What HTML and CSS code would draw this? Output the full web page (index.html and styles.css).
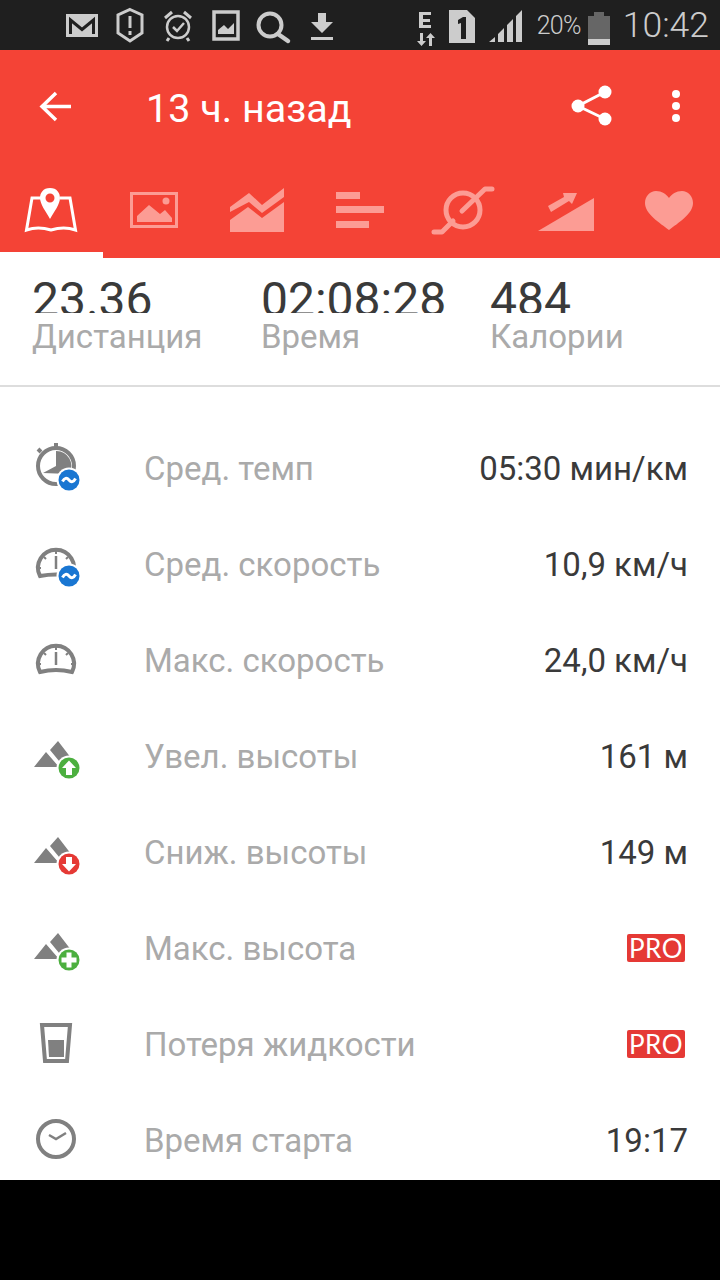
FILE: index.html
```html
<!DOCTYPE html>
<html lang="en">
<head>
  <meta charset="UTF-8" />
  <title>13 ч. назад</title>
  <link rel="stylesheet" href="styles.css">
</head>
<body>
  <div class="screen">

    <div class="status">
      <div class="status-left">
        <svg viewBox="58 0 48 50"><path class="st-fill" d="M66 14H98V37H66Z"/><path d="M70.500 34V20L82 29.500L93.500 20V34" fill="none" stroke="#1f1f1f" stroke-width="3"/></svg>
        <svg viewBox="106 0 48 50"><path d="M130 9.500L142 15V33L130 41L118 33V15Z" fill="none" stroke="#ccc" stroke-width="3"/><path class="st-fill" d="M128.500 16H131.500V28H128.500ZM128.500 31H131.500V35H128.500Z"/></svg>
        <svg viewBox="154 0 48 50"><circle cx="178" cy="27" r="11" fill="none" stroke="#ccc" stroke-width="2.500"/><path d="M165 18L172 12M191 18L184 12M169 38L167 41M187 38L189 41" stroke="#ccc" stroke-width="3"/><path d="M173 27L177 31L184 23" fill="none" stroke="#ccc" stroke-width="2.500"/></svg>
        <svg viewBox="202 0 48 50"><path d="M214 12H238V39H214Z" fill="none" stroke="#ccc" stroke-width="3.500"/><path class="st-fill" d="M218 34V30L224 25L228 29L234 23V34Z"/></svg>
        <svg viewBox="250 0 48 50"><circle cx="270" cy="25" r="11.500" fill="none" stroke="#ccc" stroke-width="4"/><path d="M278 34L288 41" stroke="#ccc" stroke-width="4.500" stroke-linecap="round"/></svg>
        <svg viewBox="298 0 48 50"><path class="st-fill" d="M318 13H326V22H333L322 33L311 22H318ZM311 37H333V40H311Z"/></svg>
      </div>
      <div class="status-right">
        <svg class="ic-net" viewBox="0 0 20 36"><path class="st-fill" d="M3 1H15V4H7V8H14V11H7V14H15V17H3Z"/><path class="st-fill" d="M7 22V30H10L5.500 35L1 30H4V22ZM13 35V27H10L14.500 22L19 27H16V35Z"/></svg>
        <svg class="ic-sim" viewBox="0 0 26 33"><path class="st-fill" d="M0 0H18L26 8V33H0Z"/><path d="M9 10L14 7H17V29H12V13L9 14Z" fill="#1f1f1f"/></svg>
        <svg class="ic-signal" viewBox="0 0 34 33"><path class="st-fill" d="M0 32L6 27V32ZM9 24L15 18V32H9ZM18 15L24 9V32H18ZM27 6L33 0V32H27Z"/></svg>
        <span class="batt-pct">20%</span>
        <div class="batt"><div class="batt-level"></div></div>
        <span class="clock">10:42</span>
      </div>
    </div>

    <div class="appbar">
      <div class="toolbar">
        <svg class="back" viewBox="0 0 36 34"><path d="M33 16.500H5M18 3L4 16.500L18 30" fill="none" stroke="#fff" stroke-width="3.500"/></svg>
        <div class="title">13 ч. назад</div>
        <svg class="share" viewBox="568 84 48 44"><circle cx="605" cy="92" r="6.500" fill="#fff"/><circle cx="578" cy="106" r="6.500" fill="#fff"/><circle cx="605" cy="119" r="6.500" fill="#fff"/><path d="M605 92L578 106L605 119" fill="none" stroke="#fff" stroke-width="3"/></svg>
        <svg class="more" viewBox="0 0 10 34"><circle cx="5" cy="5" r="4" fill="#fff"/><circle cx="5" cy="17" r="4" fill="#fff"/><circle cx="5" cy="29" r="4" fill="#fff"/></svg>
      </div>
      <div class="tabs">
        <div class="tab active">
          <svg viewBox="19 182 64 56"><path d="M41 198H32L26.500 230Q38 226 51 230Q64 226 75.500 230L70 198H60" fill="none" stroke="#fff" stroke-width="3"/><path fill-rule="evenodd" fill="#fff" d="M50 188C43 188 40 193 40 198C40 204 46 212 50 219C54 212 60 204 60 198C60 193 57 188 50 188ZM50 193.500A4.500 4.500 0 1 1 50 202.500A4.500 4.500 0 1 1 50 193.500Z"/></svg>
        </div>
        <div class="tab">
          <svg viewBox="122 182 64 56"><path d="M131.500 193.500H176.500V226.500H131.500Z" fill="none" stroke="#fc9c94" stroke-width="3"/><path class="tab-fill" d="M137 222V216L149 205L160 214L165 210L172 218V222Z"/><circle class="tab-fill" cx="166" cy="201" r="3.500"/></svg>
        </div>
        <div class="tab">
          <svg viewBox="225 182 64 56"><path class="tab-fill" d="M230 207L249 193L262 205L284 188V197L262 213L249 202L230 212Z"/><path class="tab-fill" d="M230 220L248 207L262 218L284 202V232H230Z"/></svg>
        </div>
        <div class="tab">
          <svg viewBox="328 182 64 56"><path class="tab-fill" d="M336 192H360V199H336ZM336 206H384V213H336ZM336 221H369V228H336Z"/></svg>
        </div>
        <div class="tab">
          <svg viewBox="431 182 64 56"><circle cx="463" cy="210" r="17" fill="none" stroke="#fc9c94" stroke-width="5"/><path d="M462 211L485 189H492M434 232H442L453 221" fill="none" stroke="#fc9c94" stroke-width="5" stroke-linecap="round" stroke-linejoin="round"/></svg>
        </div>
        <div class="tab">
          <svg viewBox="534 182 64 56"><path class="tab-fill" d="M538 231L594 198V231Z"/><path class="tab-fill" d="M548 206L564 197L563 193L577 193L572 204L569 201L551 212Z"/></svg>
        </div>
        <div class="tab">
          <svg viewBox="637 182 64 56"><path class="tab-fill" d="M669 230C660 223 645 214 645 203C645 196 650 191 656 191C662 191 666 194 669 198C672 194 676 191 682 191C688 191 693 196 693 203C693 214 678 223 669 230Z"/></svg>
        </div>
      </div>
    </div>

    <div class="stats">
      <div class="stat">
        <div class="stat-value">23.36</div>
        <div class="stat-label">Дистанция</div>
      </div>
      <div class="stat">
        <div class="stat-value">02:08:28</div>
        <div class="stat-label">Время</div>
      </div>
      <div class="stat">
        <div class="stat-value">484</div>
        <div class="stat-label">Калории</div>
      </div>
    </div>

    <div class="rows">
      <div class="row">
        <svg viewBox="0 0 60 60"><circle cx="30" cy="27" r="18" class="line"/><path d="M30 8V4M15 13L12 10" class="knob"/><path class="solid" d="M30 12A15 15 0 0 1 43 35L17 34L30 27Z"/><circle class="ring" cx="43" cy="41" r="12.500"/><circle class="blue" cx="43" cy="41" r="10.500"/><path class="wave" d="M36.500 42.500Q39.500 37 43 41T49.500 39.500"/></svg>
        <span class="label">Сред. темп</span>
        <span class="value">05:30 мин/км</span>
      </div>
      <div class="row">
        <svg viewBox="0 0 60 60"><path class="line" d="M14 41A18 18 0 1 1 46 41Q30 38 14 41Z"/><path class="tick" d="M30 16V19M18 22L20 24M42 22L40 24M13 33H15"/><path class="needle" d="M30 21V34"/><circle class="ring" cx="43" cy="41" r="12.500"/><circle class="blue" cx="43" cy="41" r="10.500"/><path class="wave" d="M36.500 42.500Q39.500 37 43 41T49.500 39.500"/></svg>
        <span class="label">Сред. скорость</span>
        <span class="value">10,9 км/ч</span>
      </div>
      <div class="row">
        <svg viewBox="0 0 60 60"><path class="line" d="M14 41A18 18 0 1 1 46 41Q30 37 14 41Z"/><path class="tick" d="M30 16V19M18 22L20 24M42 22L40 24M13 33H15M47 33H45"/><path class="needle" d="M30 21V34"/></svg>
        <span class="label">Макс. скорость</span>
        <span class="value">24,0 км/ч</span>
      </div>
      <div class="row">
        <svg viewBox="0 0 60 60"><path class="solid" d="M8 40L20 25L33 40ZM24 23L32 14L52 40H38Z"/><circle class="ring" cx="43" cy="41" r="12.500"/><circle class="green" cx="43" cy="41" r="10.500"/><path class="mark" d="M43 33.500L50 41H46V48H40V41H36Z"/></svg>
        <span class="label">Увел. высоты</span>
        <span class="value">161 м</span>
      </div>
      <div class="row">
        <svg viewBox="0 0 60 60"><path class="solid" d="M8 40L20 25L33 40ZM24 23L32 14L52 40H38Z"/><circle class="ring" cx="43" cy="41" r="12.500"/><circle class="red" cx="43" cy="41" r="10.500"/><path class="mark" d="M43 48.500L50 41H46V34H40V41H36Z"/></svg>
        <span class="label">Сниж. высоты</span>
        <span class="value">149 м</span>
      </div>
      <div class="row">
        <svg viewBox="0 0 60 60"><path class="solid" d="M8 40L20 25L33 40ZM24 23L32 14L52 40H38Z"/><circle class="ring" cx="43" cy="41" r="12.500"/><circle class="green" cx="43" cy="41" r="10.500"/><path class="mark" d="M40.500 33.500H45.500V38.500H50.500V43.500H45.500V48.500H40.500V43.500H35.500V38.500H40.500Z"/></svg>
        <span class="label">Макс. высота</span>
        <span class="pro">PRO</span>
      </div>
      <div class="row">
        <svg viewBox="0 0 60 60"><path class="line" d="M16 10H44L41 46H19Z"/><path class="solid" d="M22 25H38V42H23Z"/></svg>
        <span class="label">Потеря жидкости</span>
        <span class="pro">PRO</span>
      </div>
      <div class="row">
        <svg viewBox="0 0 60 60"><circle cx="30" cy="28" r="18" class="line"/><path class="hands" d="M23 24L30 28L40 22"/></svg>
        <span class="label">Время старта</span>
        <span class="value">19:17</span>
      </div>
    </div>

  </div>
  <div class="navbar"></div>
</body>
</html>
```

FILE: styles.css
```css
body {
  font-family: Roboto, sans-serif;
  background: #000;
  margin: 0;
  width: 720px;
  height: 1280px;
  overflow: hidden;
}

.screen {
  height: 1180px;
  background: white;
  overflow: hidden;
}

.navbar {
  height: 100px;
  background: #000;
}

/* status bar */
.status {
  height: 50px;
  background: #1f1f1f;
  display: flex;
  justify-content: space-between;
  color: #ccc;
}

.st-fill {
  fill: #ccc;
}

.status-left {
  display: flex;
  margin-left: 58px;
}

.status-left svg {
  width: 48px;
  height: 50px;
}

.status-right {
  display: flex;
  align-items: center;
  padding-right: 11px;
}

.ic-net {
  width: 20px;
  height: 36px;
  margin-top: 8px;
}

.ic-sim {
  width: 26px;
  height: 33px;
  margin-left: 13px;
  margin-top: 2px;
}

.ic-signal {
  width: 34px;
  height: 33px;
  margin-left: 14px;
  margin-top: 2px;
}

.batt-pct {
  font-size: 25px;
  font-weight: 300;
  margin-left: 14px;
  letter-spacing: -0.7px;
}

.batt {
  width: 22px;
  height: 29px;
  margin-left: 7px;
  margin-top: 7px;
  background: #666;
  border-top: 3px solid #1f1f1f;
  position: relative;
  display: flex;
  align-items: flex-end;
}

.batt::before {
  content: "";
  position: absolute;
  top: -4px;
  left: 6px;
  width: 10px;
  height: 4px;
  background: #666;
}

.batt-level {
  width: 100%;
  height: 6px;
  background: #ccc;
}

.clock {
  font-size: 35.5px;
  font-weight: 300;
  margin-left: 13px;
}

/* red header */
.appbar {
  height: 208px;
  background: #f44336;
}

.toolbar {
  height: 112px;
  display: flex;
  align-items: center;
  color: white;
}

.back {
  width: 36px;
  height: 34px;
  margin-left: 38px;
  margin-top: 2px;
}

.title {
  font-size: 39.5px;
  margin-left: 72px;
  margin-top: 4px;
  flex: 1;
}

.share {
  width: 48px;
  height: 44px;
}

.more {
  width: 10px;
  height: 34px;
  margin-left: 55px;
  margin-right: 39px;
}

.tabs {
  display: grid;
  grid-template-columns: repeat(7, 1fr);
  height: 96px;
}

.tab {
  height: 90px;
  padding-top: 20px;
  box-sizing: border-box;
  display: flex;
  justify-content: center;
}

.tab svg {
  width: 64px;
  height: 56px;
}

.tab.active {
  height: 96px;
  border-bottom: 6px solid white;
}

.tab-fill {
  fill: #fc9c94;
}

/* totals */
.stats {
  height: 127px;
  padding-left: 32px;
  display: flex;
  border-bottom: 2px solid #ddd;
}

.stat {
  width: 229px;
}

.stat-value {
  height: 55px;
  overflow: hidden;
  font-size: 48px;
  line-height: 83px;
  color: #3a3a3a;
}

.stat-label {
  font-size: 33px;
  line-height: 48px;
  color: #aaa;
}

/* detail rows */
.rows {
  padding-top: 34px;
}

.row {
  height: 96px;
  display: flex;
  align-items: center;
  padding: 0 32px 0 26px;
  font-size: 33px;
}

.row svg {
  width: 60px;
  height: 60px;
  flex: none;
}

.label {
  margin-left: 58px;
  margin-bottom: 2px;
  flex: 1;
  color: #aaa;
}

.value {
  margin-bottom: 2px;
  color: #3a3a3a;
}

.pro {
  background: #e53935;
  color: white;
  font-family: Lato, sans-serif;
  font-size: 26px;
  line-height: 28px;
  width: 58px;
  text-align: center;
  letter-spacing: 0.5px;
  border-radius: 2px;
  margin-right: 3px;
  margin-top: -2px;
}

.line {
  fill: none;
  stroke: #808080;
  stroke-width: 4;
}

.solid {
  fill: #808080;
}

.knob {
  fill: none;
  stroke: #808080;
  stroke-width: 4;
}

.tick {
  fill: none;
  stroke: #808080;
  stroke-width: 2;
}

.needle {
  fill: none;
  stroke: #808080;
  stroke-width: 2.5;
}

.hands {
  fill: none;
  stroke: #808080;
  stroke-width: 2.5;
}

.ring {
  fill: white;
}

.blue {
  fill: #1976d2;
}

.green {
  fill: #4caf3f;
}

.red {
  fill: #e53935;
}

.mark {
  fill: white;
}

.wave {
  fill: none;
  stroke: white;
  stroke-width: 3;
}
```
